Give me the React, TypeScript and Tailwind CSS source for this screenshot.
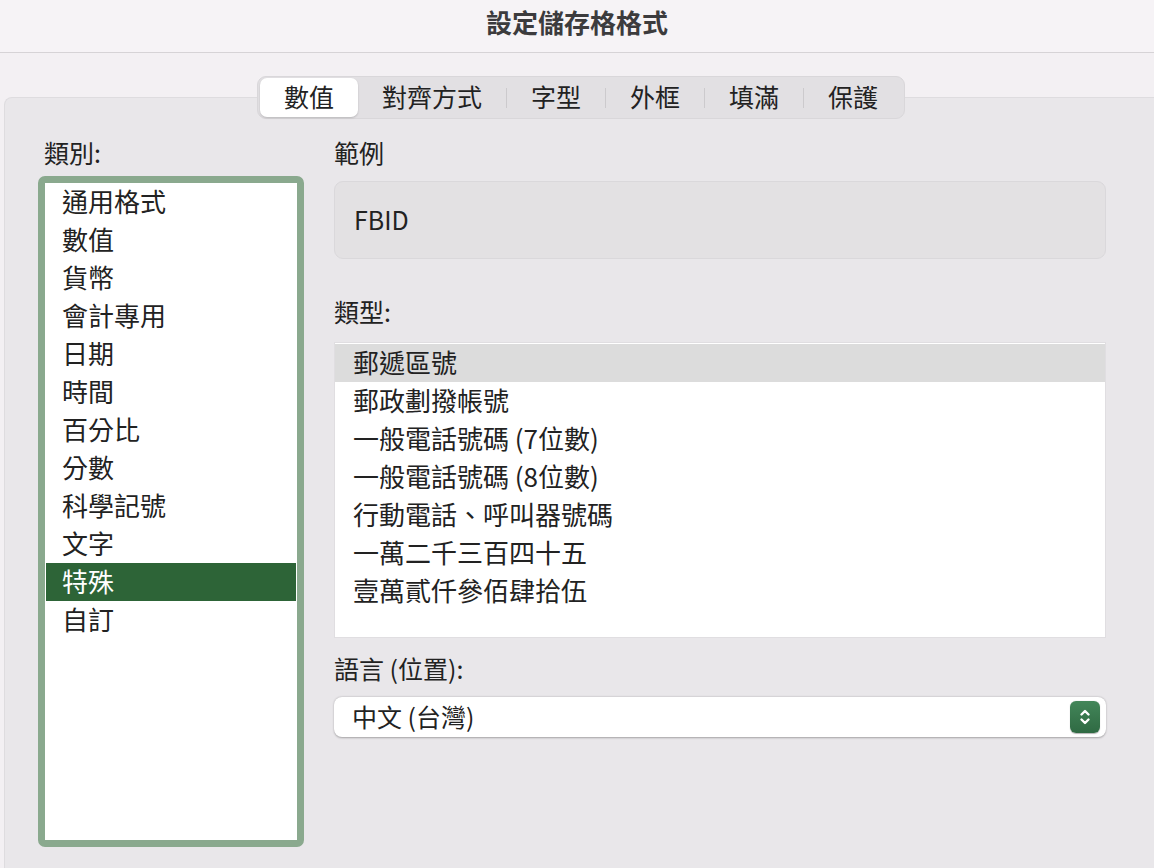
import { useState } from 'react';

const categories = [
  '通用格式',
  '數值',
  '貨幣',
  '會計專用',
  '日期',
  '時間',
  '百分比',
  '分數',
  '科學記號',
  '文字',
  '特殊',
  '自訂',
];

const types = [
  '郵遞區號',
  '郵政劃撥帳號',
  '一般電話號碼 (7位數)',
  '一般電話號碼 (8位數)',
  '行動電話、呼叫器號碼',
  '一萬二千三百四十五',
  '壹萬貳仟參佰肆拾伍',
];

const tabs = ['數值', '對齊方式', '字型', '外框', '填滿', '保護'];

const font = { fontFamily: '"Noto Sans CJK TC", "Noto Sans", sans-serif' };

export default function App() {
  const [tab, setTab] = useState(0);
  const [category, setCategory] = useState(10);
  const [type, setType] = useState(0);

  return (
    <div
      className="w-[1154px] h-[868px] overflow-hidden bg-[#f3f0f3] text-[#222] flex flex-col"
      style={font}
    >
      {/* Title bar */}
      <div className="h-[53px] shrink-0 flex items-center justify-center pb-[8px] border-b border-[#d6d3d6] bg-[#f6f3f6]">
        <span className="text-[26px] leading-[30px] font-semibold text-[#3c3b3d]">設定儲存格格式</span>
      </div>

      <div className="flex-1 flex flex-col pl-[4px] pt-[23px]">
        {/* Tabs */}
        <div className="relative z-10 flex justify-center pl-[4px]">
          <div className="flex items-center h-[43px] p-[2px] rounded-[9px] bg-[#e2e0e3] border border-[#d9d7da]">
            {tabs.map((t, i) => (
              <div key={t} className="flex items-center h-full">
                {i > 1 && i !== tab && i - 1 !== tab && (
                  <div className="w-px h-[20px] bg-[#cccacd]" />
                )}
                {i > 1 && (i === tab || i - 1 === tab) && <div className="w-px h-[20px]" />}
                <button
                  onClick={() => setTab(i)}
                  className={
                    'h-[39px] px-[24px] pb-[3px] text-[25px] leading-[30px] rounded-[7px] ' +
                    (i === tab ? 'bg-white shadow-[0_1px_2px_rgba(0,0,0,0.18)]' : '')
                  }
                >
                  {t}
                </button>
              </div>
            ))}
          </div>
        </div>

        {/* Panel */}
        <div className="-mt-[22px] flex-1 bg-[#e9e7ea] border-t border-l border-[#dedcdf] rounded-tl-[8px] flex pt-[41px] pl-[33px]">
          {/* Category column */}
          <div className="w-[266px] flex flex-col">
            <div className="h-[28px] pl-[6px] text-[25px] leading-[26px]">類別:</div>
            <div className="mt-[9px] h-[671px] border-[7px] border-[#8aa98e] rounded-[7px] bg-white">
              {categories.map((c, i) => (
                <div
                  key={c}
                  onClick={() => setCategory(i)}
                  className={
                    'h-[38px] flex items-center pl-[17px] pb-[3px] text-[26px] leading-[30px] ' +
                    (i === category ? 'bg-[#2d6437] text-white mx-px' : '')
                  }
                >
                  {i === category ? <span className="-ml-px">{c}</span> : c}
                </div>
              ))}
            </div>
          </div>

          {/* Right column */}
          <div className="ml-[30px] w-[772px] flex flex-col">
            <div className="h-[28px] text-[25px] leading-[26px]">範例</div>
            <div className="mt-[14px] h-[78px] rounded-[9px] bg-[#e3e1e3] border border-[#dad8db] flex items-center pl-[19px] pb-[2px] text-[25px] leading-[30px]">
              FBID
            </div>

            <div className="mt-[39px] h-[28px] text-[25px] leading-[26px]">類型:</div>
            <div className="mt-[16px] h-[296px] bg-white border border-[#e0dee1] pt-[1px]">
              {types.map((t, i) => (
                <div
                  key={t}
                  onClick={() => setType(i)}
                  className={
                    'h-[38px] flex items-center pl-[18px] pb-[3px] text-[26px] leading-[30px] ' +
                    (i === type ? 'bg-[#dcdcdc]' : '')
                  }
                >
                  {t}
                </div>
              ))}
            </div>

            <div className="mt-[17px] h-[28px] text-[25px] leading-[26px]">語言 (位置):</div>
            <div className="mt-[14px] h-[40px] rounded-[8px] bg-white shadow-[0_0.5px_2px_rgba(0,0,0,0.3)] flex items-center justify-between pl-[18px] pr-[6px]">
              <span className="text-[25px] leading-[30px] pb-[2px]">中文 (台灣)</span>
              <div className="w-[30px] h-[32px] rounded-[6px] bg-gradient-to-b from-[#438659] to-[#2f6a43] flex items-center justify-center shadow-[0_0.5px_1px_rgba(0,0,0,0.3)]">
                <svg width="14" height="22" viewBox="0 0 14 22" fill="none" stroke="white" strokeWidth="2.4" strokeLinecap="round" strokeLinejoin="round">
                  <path d="M3.5 8.5 L7 5 L10.5 8.5" />
                  <path d="M3.5 13.5 L7 17 L10.5 13.5" />
                </svg>
              </div>
            </div>
          </div>
        </div>
      </div>
    </div>
  );
}
